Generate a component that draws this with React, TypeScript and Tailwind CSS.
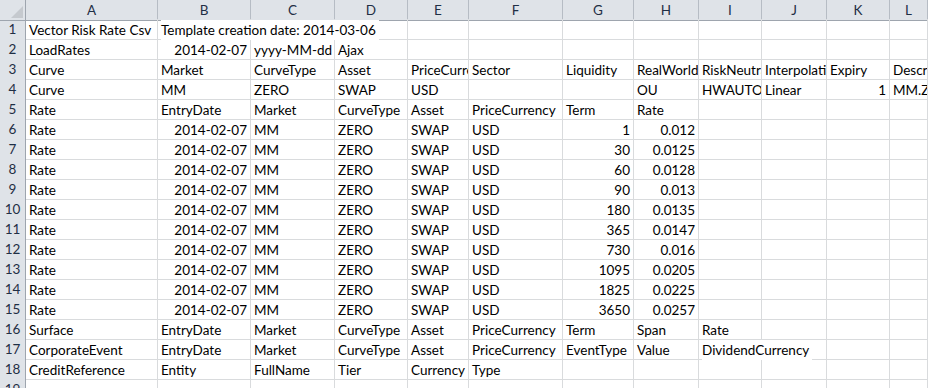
const COLS = ['A', 'B', 'C', 'D', 'E', 'F', 'G', 'H', 'I', 'J', 'K', 'L'];

type Cell = string | { v: string; r?: boolean; o?: boolean };

const rateRow = (term: string, rate: string): Cell[] => [
  'Rate',
  { v: '2014-02-07', r: true },
  'MM',
  'ZERO',
  'SWAP',
  'USD',
  { v: term, r: true },
  { v: rate, r: true },
];

const ROWS: Cell[][] = [
  ['Vector Risk Rate Csv', { v: 'Template creation date: 2014-03-06', o: true }],
  ['LoadRates', { v: '2014-02-07', r: true }, 'yyyy-MM-dd', 'Ajax'],
  ['Curve', 'Market', 'CurveType', 'Asset', 'PriceCurrency', 'Sector', 'Liquidity', 'RealWorld', 'RiskNeutral', 'Interpolation', 'Expiry', 'Description'],
  ['Curve', 'MM', 'ZERO', 'SWAP', 'USD', '', '', 'OU', 'HWAUTO', 'Linear', { v: '1', r: true }, 'MM.ZERO'],
  ['Rate', 'EntryDate', 'Market', 'CurveType', 'Asset', 'PriceCurrency', 'Term', 'Rate'],
  rateRow('1', '0.012'),
  rateRow('30', '0.0125'),
  rateRow('60', '0.0128'),
  rateRow('90', '0.013'),
  rateRow('180', '0.0135'),
  rateRow('365', '0.0147'),
  rateRow('730', '0.016'),
  rateRow('1095', '0.0205'),
  rateRow('1825', '0.0225'),
  rateRow('3650', '0.0257'),
  ['Surface', 'EntryDate', 'Market', 'CurveType', 'Asset', 'PriceCurrency', 'Term', 'Span', 'Rate'],
  ['CorporateEvent', 'EntryDate', 'Market', 'CurveType', 'Asset', 'PriceCurrency', 'EventType', 'Value', { v: 'DividendCurrency', o: true }],
  ['CreditReference', 'Entity', 'FullName', 'Tier', 'Currency', 'Type'],
  [],
];

const grid =
  'grid grid-cols-[26px_132px_93px_84px_73px_61px_94px_71px_65px_63px_65px_63px_1fr]';

export default function App() {
  return (
    <div
      className="h-[388px] w-[928px] overflow-hidden bg-white text-[13.5px] text-black"
      style={{ fontFamily: 'Lato, "Liberation Sans", sans-serif' }}
    >
      {/* column headers */}
      <div className={`${grid} h-[19px]`}>
        <div className="relative border-b border-r border-[#9ea5ae] bg-[#dfe3e8]">
          <svg className="absolute bottom-[2px] right-[2px]" width="12" height="12" viewBox="0 0 12 12">
            <polygon points="12,0 12,12 0,12" fill="#c5c9ce" />
          </svg>
        </div>
        {COLS.map((c) => (
          <div
            key={c}
            className="flex items-center justify-center border-b border-r border-b-[#9ea5ae] border-r-[#b6bcc4] bg-[#dfe3e8] text-[#1f2f45]"
          >
            {c}
          </div>
        ))}
      </div>

      {ROWS.map((row, ri) => (
        <div key={ri} className={`${grid} h-[20px]`}>
          <div className="flex items-center justify-center border-b border-r border-b-[#c3c8cf] border-r-[#9ea5ae] bg-[#dfe3e8] text-[#1f2f45]">
            {ri + 1}
          </div>
          {COLS.map((c, ci) => {
            const cell = row[ci];
            const v = typeof cell === 'string' ? cell : cell?.v ?? '';
            const right = typeof cell === 'object' && cell.r;
            const over = typeof cell === 'object' && cell.o;
            return (
              <div
                key={c}
                className={`flex items-center whitespace-nowrap border-b border-r border-[#d9dbdd] px-[3px] pt-px ${
                  over ? 'overflow-visible' : 'overflow-hidden'
                } ${right ? 'justify-end' : 'justify-start'}`}
              >
                {over ? (
                  <span className="relative z-10 -mb-px flex h-[20px] items-center bg-white pr-[3px]">{v}</span>
                ) : (
                  v
                )}
              </div>
            );
          })}
        </div>
      ))}
    </div>
  );
}
